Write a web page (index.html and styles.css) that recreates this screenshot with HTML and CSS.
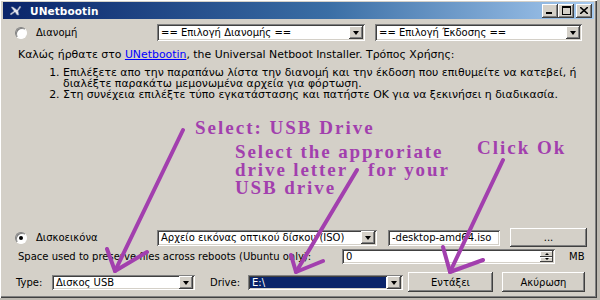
FILE: index.html
```html
<!DOCTYPE html>
<html>
<head>
<meta charset="utf-8">
<link rel="stylesheet" href="styles.css">
</head>
<body>
<div class="win">
  <div class="title">
    <svg class="ticon" width="13" height="11" viewBox="0 0 13 11">
      <path d="M1 9 L5 6 L2 2 L4 2 L8 5 L11 1 L12 2 L9 6 L10 10 L8 10 L6 7 L2 10 Z" fill="#e8e8f0" stroke="#7080a0" stroke-width="0.6"/>
    </svg>
    <span class="tname">UNetbootin</span>
    <div class="tctrls">
      <span class="tbtn"><svg width="8" height="7" viewBox="0 0 8 7"><rect x="0" y="5" width="6" height="2" fill="#000"/></svg></span>
      <span class="tbtn"><svg width="9" height="9" viewBox="0 0 9 9"><rect x="0.5" y="0.5" width="8" height="8" fill="none" stroke="#000"/><rect x="0" y="0" width="9" height="2" fill="#000"/></svg></span>
      <span class="tbtn tclose"><svg width="8" height="7" viewBox="0 0 8 7"><path d="M0 0 L8 7 M8 0 L0 7" stroke="#000" stroke-width="1.6"/></svg></span>
    </div>
  </div>
  <div class="content">
    <div class="row r1">
      <div class="opt"><span class="radio"></span><span>Διανομή</span></div>
      <div class="select s1"><span class="val">== Επιλογή Διανομής ==</span><span class="dd"><i></i></span></div>
      <div class="select s2"><span class="val">== Επιλογή Έκδοσης ==</span><span class="dd"><i></i></span></div>
    </div>
    <p class="intro">Καλώς ήρθατε στο <span class="link">UNetbootin</span>, the Universal Netboot Installer. Τρόπος Χρήσης:</p>
    <ol class="steps">
      <li>Επιλέξετε απο την παραπάνω λίστα την διανομή και την έκδοση που επιθυμείτε να κατεβεί, ή διαλέξτε παρακάτω μεμονωμένα αρχεία για φόρτωση.</li>
      <li>Στη συνέχεια επιλέξτε τύπο εγκατάστασης και πατήστε OK για να ξεκινήσει η διαδικασία.</li>
    </ol>
    <div class="grow"></div>
    <div class="row r2">
      <div class="opt opt2"><span class="radio checked"></span><span>Δισκοεικόνα</span></div>
      <div class="select s3"><span class="val">Αρχείο εικόνας οπτικού δίσκου (ISO)</span><span class="dd"><i></i></span></div>
      <div class="field s4"><span class="val">-desktop-amd64.iso</span></div>
      <div class="btn b1">...</div>
    </div>
    <div class="row r3">
      <span class="lbl3">Space used to preserve files across reboots (Ubuntu only):</span>
      <div class="field s5"><span class="val">0</span><span class="spin"><b><i class="up"></i></b><b><i></i></b></span></div>
      <span class="mb">MB</span>
    </div>
    <div class="row r4">
      <span class="lbl4">Type:</span>
      <div class="select s6"><span class="val">Δισκος USB</span><span class="dd"><i></i></span></div>
      <span class="lbl5">Drive:</span>
      <div class="select s7"><span class="val sel">E:\</span><span class="dd"><i></i></span></div>
      <div class="btn b2">Εντάξει</div>
      <div class="btn b3">Ακύρωση</div>
    </div>
  </div>
  <div class="annot">
    <div class="note n1">Select: USB Drive</div>
    <div class="note n2">Select the approriate<br>drive letter&nbsp;&nbsp; for your<br>USB drive</div>
    <div class="note n3">Click Ok</div>
    <svg class="arrows" width="600" height="300" viewBox="0 0 600 300">
      <g stroke="#a23fae" stroke-width="4" stroke-linecap="round" stroke-linejoin="round" fill="none">
        <path d="M183 130 L115 271"/>
        <path d="M107 249 L115 271 L147 252"/>
        <path d="M357 170 L296 272"/>
        <path d="M291 255 L296 272 L323 261"/>
        <path d="M503 160 L450 272"/>
        <path d="M443 247 L450 272 L483 260"/>
      </g>
    </svg>
  </div>
</div>
</body>
</html>
```
FILE: styles.css
```css
* { box-sizing: border-box; }
html, body { margin: 0; padding: 0; }
body { width: 600px; height: 300px; overflow: hidden; background: #bdb9b1; }

.win {
  position: relative;
  width: 597px;
  height: 298px;
  background: #d4d0c8;
  padding: 2px 3px 2px 3px;
  box-shadow: inset 1px 1px #ffffff, inset -1px -1px #404040, inset -2px -2px #808080;
  display: flex;
  flex-direction: column;
  font-family: "DejaVu Sans", Verdana, sans-serif;
  font-size: 10px;
  color: #000;
}

.title {
  height: 17px;
  background: linear-gradient(to right, #0a246a 0%, #3a6ea5 55%, #a6caf0 100%);
  display: flex;
  align-items: center;
  padding-left: 4px;
  flex: none;
}
.ticon { margin-right: 8px; margin-left: 2px; }
.tname { color: #fff; font-weight: bold; font-size: 10.5px; letter-spacing: 0.1px; }
.tctrls { margin-left: auto; display: flex; margin-right: 2px; }
.tbtn {
  width: 16px; height: 14px;
  background: #d4d0c8;
  box-shadow: inset -1px -1px #404040, inset 1px 1px #fff, inset -2px -2px #808080;
  display: flex; align-items: center; justify-content: center;
}
.tclose { margin-left: 2px; }

.content {
  flex: 1;
  display: flex;
  flex-direction: column;
  padding: 0 0 4px 11px;
}

.row { display: flex; align-items: center; flex: none; }
.r1 { margin-top: 5px; height: 17px; }

.opt { width: 143px; display: flex; align-items: center; }
.radio {
  width: 12px; height: 12px; border-radius: 50%;
  background: #fff;
  box-shadow: inset 1px 1px #808080, inset -1px -1px #fff;
  border: 1px solid;
  border-color: #808080 #fff #fff #808080;
  margin-left: 1px;
  margin-right: 9px;
  position: relative;
}
.radio.checked::after {
  content: ""; position: absolute; left: 3px; top: 3px;
  width: 4px; height: 4px; border-radius: 50%; background: #000;
}

.select, .field {
  background: #fff;
  box-shadow: inset 1px 1px #808080, inset -1px -1px #fff, inset 2px 2px #404040, inset -2px -2px #d4d0c8;
  height: 17px;
  display: flex;
  align-items: center;
  padding: 2px;
  white-space: nowrap;
  overflow: hidden;
}
.select .val, .field .val { flex: 1; padding-left: 2px; overflow: hidden; }
.dd {
  width: 14px; height: 13px; flex: none;
  background: #d4d0c8;
  box-shadow: inset -1px -1px #404040, inset 1px 1px #fff, inset -2px -2px #808080;
  display: flex; align-items: center; justify-content: center;
}
.dd i {
  width: 0; height: 0;
  border-left: 3.5px solid transparent;
  border-right: 3.5px solid transparent;
  border-top: 4px solid #000;
  margin-top: 1px;
}

.s1 { width: 208px; }
.s2 { width: 207px; margin-left: 10px; }

.intro { margin: 7px 0 0 4px; line-height: 13px; font-size: 10.9px; }
.link { color: #0000ff; text-decoration: underline; }

.steps { margin: 6px 0 0 0; padding-left: 49px; padding-right: 6px; line-height: 11px; font-size: 10.9px; }
.steps li { padding-left: 0; }

.grow { flex: 1; }

.r2 { height: 19px; }
.opt2 { width: 143px; }
.s3 { width: 220px; height: 16px; }
.s4 { width: 112px; height: 16px; margin-left: 11px; }
.btn {
  background: #d4d0c8;
  box-shadow: inset -1px -1px #404040, inset 1px 1px #fff, inset -2px -2px #808080, inset 2px 2px #d4d0c8;
  display: flex; align-items: center; justify-content: center;
}
.b1 { width: 77px; height: 19px; margin-left: 10px; }

.r3 { margin-top: 2px; height: 15px; }
.lbl3 { width: 328px; padding-left: 4px; white-space: nowrap; }
.s5 { width: 213px; height: 15px; padding: 2px 2px 2px 2px; }
.spin { width: 13px; height: 11px; display: flex; flex-direction: column; flex: none; }
.spin b {
  flex: 1; background: #d4d0c8;
  box-shadow: inset -1px -1px #404040, inset 1px 1px #fff;
  display: flex; align-items: center; justify-content: center;
}
.spin i { width: 0; height: 0; border-left: 2px solid transparent; border-right: 2px solid transparent; border-top: 2px solid #000; }
.spin i.up { border-top: 0; border-bottom: 2px solid #000; }
.mb { margin-left: 14px; }

.r4 { margin-top: 8px; height: 20px; }
.lbl4 { width: 38px; padding-left: 2px; }
.s6 { width: 143px; height: 15px; }
.lbl5 { width: 38px; margin-left: 15px; }
.s7 { width: 155px; height: 15px; }
.val.sel { background: #0a246a; color: #fff; align-self: stretch; display: flex; align-items: center; margin-right: 1px; }
.b2 { width: 85px; height: 20px; margin-left: 5px; }
.b3 { width: 83px; height: 20px; margin-left: 9px; }

.annot { position: absolute; left: 0; top: 0; width: 600px; height: 300px; pointer-events: none; }
.arrows { position: absolute; left: 0; top: 0; }
.note {
  position: absolute;
  font-family: "Liberation Serif", "Times New Roman", serif;
  font-weight: bold;
  font-size: 19px;
  letter-spacing: 2px;
  color: #a23fae;
  line-height: 18px;
  white-space: nowrap;
}
.n1 { left: 195px; top: 119px; }
.n2 { left: 235px; top: 143px; letter-spacing: 1.9px; }
.n3 { left: 477px; top: 139px; }
```
